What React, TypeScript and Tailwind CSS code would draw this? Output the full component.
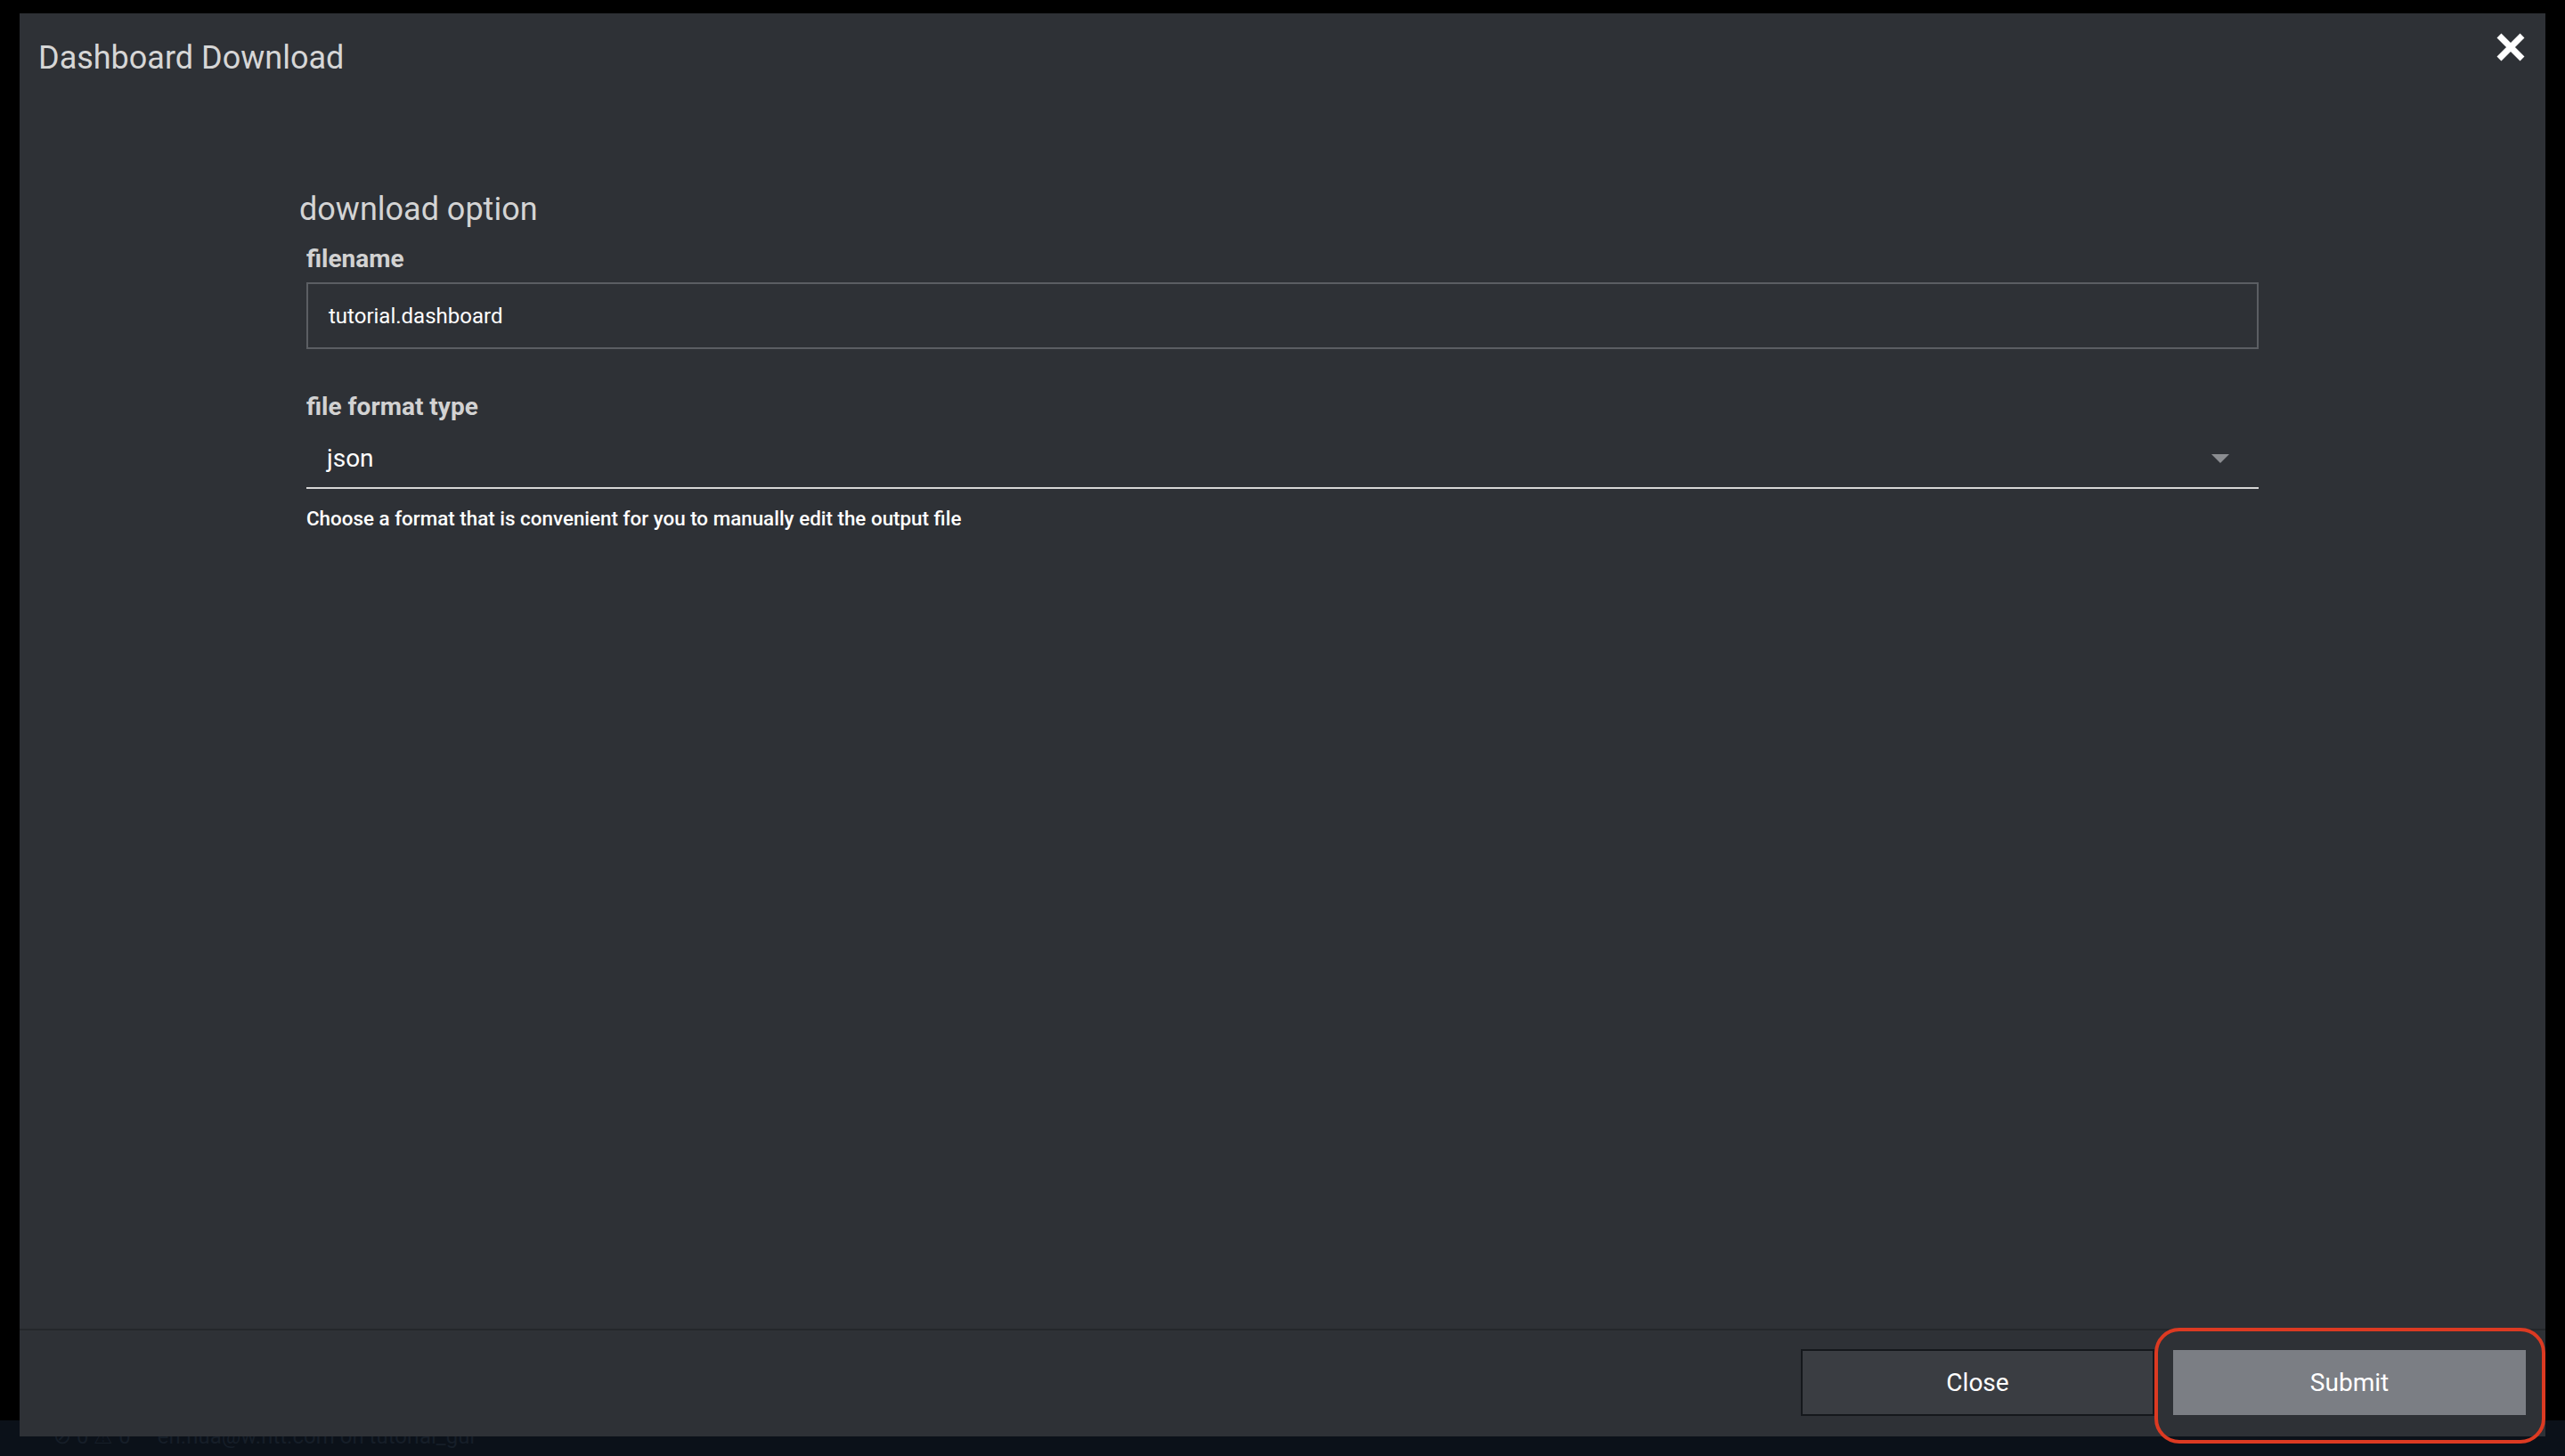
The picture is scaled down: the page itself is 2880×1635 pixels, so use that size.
import React from "react";

const CloseIcon = () => (
  <svg width="32" height="32" viewBox="0 0 32 32" className="block">
    <path d="M3 3 L29 29 M29 3 L3 29" stroke="#ffffff" strokeWidth="7" strokeLinecap="butt" fill="none" />
  </svg>
);

export default function App() {
  return (
    <div className="relative w-[2880px] h-[1635px] overflow-hidden bg-black font-['Roboto','Liberation_Sans',sans-serif] flex flex-col justify-end">
      {/* app status bar under the dialog */}
      <div className="h-[40px] bg-[#0b1119] flex items-end pl-[60px] pb-[4px] gap-[30px] text-[24px] text-[#161e28]">
        <span>⊘ 0 ⚠ 0</span>
        <span>en.nua@w.ntt.com on tutorial_gui</span>
      </div>

      {/* dialog */}
      <div className="absolute left-[22px] top-[15px] w-[2836px] h-[1598px] bg-[#2e3136] flex flex-col">
        <div className="flex justify-between items-start pl-[21px] pr-[23px]">
          <h1 className="pt-[26px] text-[36px] leading-[48px] text-[#d6d6d6]">Dashboard Download</h1>
          <button type="button" className="mt-[22px]">
            <CloseIcon />
          </button>
        </div>

        <div className="flex-1 pl-[314px] pr-[322px] pt-[122px]">
          <h2 className="text-[36px] leading-[48px] text-[#d4d4d4]">download option</h2>

          <div className="pl-[8px]">
            <label className="block mt-[14px] text-[28px] leading-[36px] font-bold text-[#d2d2d2]">filename</label>
            <div className="mt-[8px] h-[75px] border-2 border-[#5b5e63] flex items-center pl-[23px] text-[24px] text-white">
              tutorial.dashboard
            </div>

            <label className="block mt-[47px] text-[28px] leading-[36px] font-bold text-[#d2d2d2]">file format type</label>
            <div className="mt-[22px] flex items-center justify-between pl-[23px] pr-[33px] pb-[14px] border-b-2 border-[#d6d6d6]">
              <span className="text-[28px] leading-[36px] text-white">json</span>
              <svg width="20" height="10" viewBox="0 0 20 10" className="block">
                <path d="M0 0 L20 0 L10 10 Z" fill="#8b8d91" />
              </svg>
            </div>
            <p className="mt-[17px] text-[22.4px] leading-[32px] font-medium text-white">
              Choose a format that is convenient for you to manually edit the output file
            </p>
          </div>
        </div>

        <div className="border-t-2 border-[#24272b] flex justify-end gap-[21px] pt-[21px] pb-[23px] pr-[22px]">
          <button type="button" className="w-[397px] h-[75px] bg-[#3a3d42] border-2 border-[#15181c] text-[28px] text-white">
            Close
          </button>
          <button type="button" className="w-[396px] h-[73px] mt-[1px] bg-[#7b7e84] text-[28px] text-white">
            Submit
          </button>
        </div>
      </div>

      {/* annotation around submit */}
      <div className="absolute left-[2419px] top-[1491px] w-[439px] h-[130px] border-4 border-[#dc3a22] rounded-[28px]" />
    </div>
  );
}
